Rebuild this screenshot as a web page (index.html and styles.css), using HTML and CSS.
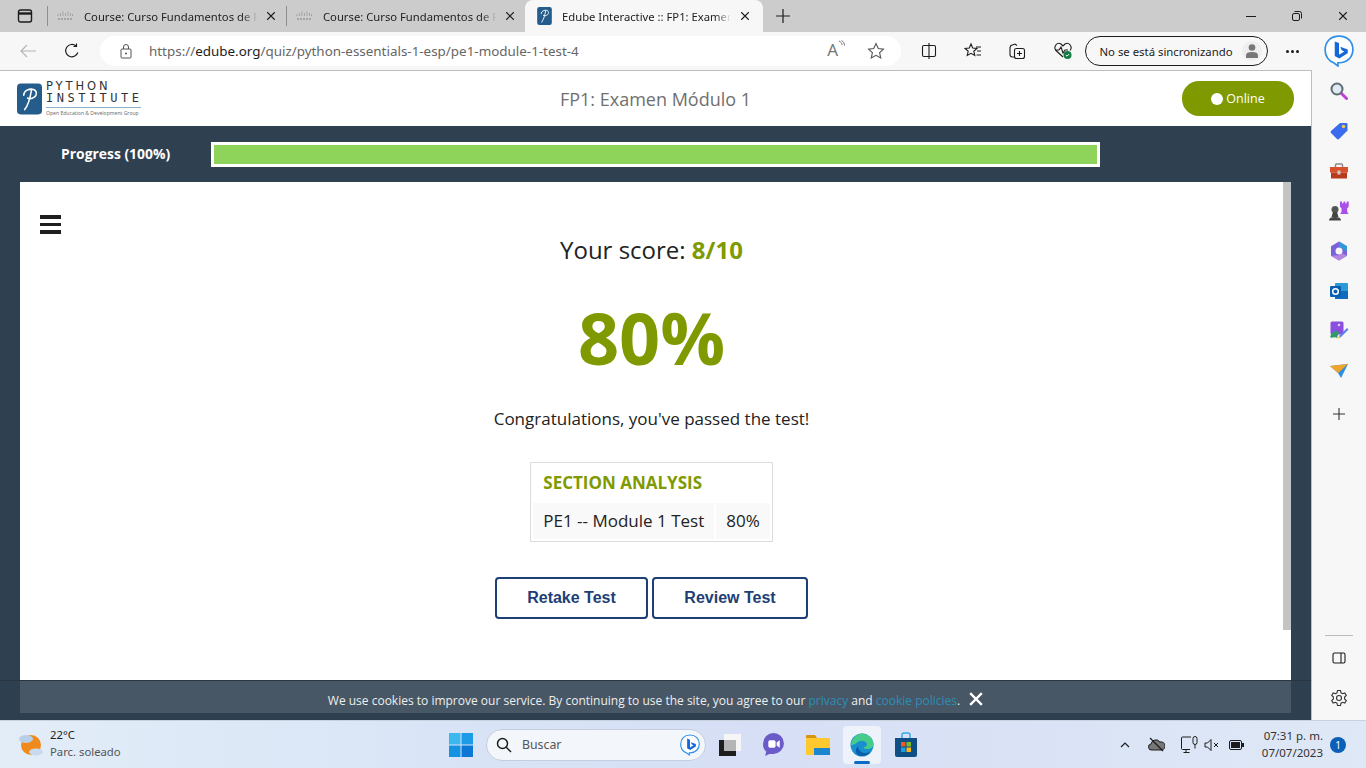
FILE: index.html
```html
<!DOCTYPE html>
<html lang="en">
<head>
  <meta charset="UTF-8">
  <title>Edube Interactive :: FP1: Examen Módulo 1</title>
  <link rel="stylesheet" href="styles.css">
</head>
<body>
<svg width="0" height="0" class="defs">
  <symbol id="cisco" viewBox="0 0 16 10">
    <path d="M1 3v2M3.500 2v3M6 0.500v4.500M8.500 2v3M11 0.500v4.500M13.500 2v3M15.500 3v2" stroke="#a5a5a5" stroke-width="1" fill="none"/>
    <path d="M1 8h14" stroke="#a5a5a5" stroke-width="2" stroke-dasharray="2 1"/>
  </symbol>
  <symbol id="close" viewBox="0 0 12 12">
    <path d="M1.500 1.500l9 9M10.500 1.500l-9 9" stroke="currentColor" stroke-width="1.300" fill="none"/>
  </symbol>
  <symbol id="close-bold" viewBox="0 0 12 12">
    <path d="M1 1l10 10M11 1L1 11" stroke="currentColor" stroke-width="2" fill="none"/>
  </symbol>
  <symbol id="pi" viewBox="0 0 26 32">
    <rect width="26" height="32" rx="4" fill="#245c8c"/>
    <path d="M7 12c0-5 6-7 10-6 4 1 4 6 1 8-2 1.500-5 2-7 1M15 7c-1 6-3 15-7 20" stroke="#fff" stroke-width="1.600" fill="none" stroke-linecap="round"/>
  </symbol>
  <symbol id="bing-mark" viewBox="0 0 28 30">
    <path d="M14 1C6 1 1 6.500 1 14c0 6 3.500 10.500 8 12l4 3v-3h1c8 0 13-5.500 13-12.500S22 1 14 1z" fill="#fff" stroke="#2f8fe8" stroke-width="1.600"/>
    <path d="M10 6l4 1.500v11l5-3-2.500-1.200-1.300-3.300 7 2.500v3.500l-8 5-4.200-2.300z" fill="#1668d8"/>
  </symbol>
</svg>

<div class="tabstrip">
  <svg class="tabs-btn" width="16" height="16" viewBox="0 0 16 16"><rect x="1.500" y="2" width="13" height="12" rx="2" fill="none" stroke="#1c1c1c" stroke-width="1.400"/><path d="M1.500 5.500h13" stroke="#1c1c1c" stroke-width="2.400"/></svg>
  <div class="tab">
    <svg class="tab-icon" width="16" height="10"><use href="#cisco"/></svg>
    <span class="tab-title">Course: Curso Fundamentos de P</span>
    <svg class="tab-close" width="10" height="10"><use href="#close"/></svg>
  </div>
  <div class="tab">
    <svg class="tab-icon" width="16" height="10"><use href="#cisco"/></svg>
    <span class="tab-title">Course: Curso Fundamentos de P</span>
    <svg class="tab-close" width="10" height="10"><use href="#close"/></svg>
  </div>
  <div class="tab tab-active">
    <svg class="tab-icon" width="15" height="18"><use href="#pi"/></svg>
    <span class="tab-title">Edube Interactive :: FP1: Examen</span>
    <svg class="tab-close" width="10" height="10"><use href="#close"/></svg>
  </div>
  <svg class="new-tab" width="14" height="14" viewBox="0 0 14 14"><path d="M7 0v14M0 7h14" stroke="#1c1c1c" stroke-width="1.200"/></svg>
  <div class="window-btns">
    <svg width="10" height="10" viewBox="0 0 10 10"><path d="M0 5.500h10" stroke="#1c1c1c"/></svg>
    <svg width="10" height="10" viewBox="0 0 10 10"><rect x="0.500" y="2.500" width="7" height="7" rx="1.500" fill="none" stroke="#1c1c1c"/><path d="M2.500 0.500h5a2 2 0 0 1 2 2v5" fill="none" stroke="#1c1c1c"/></svg>
    <svg width="10" height="10"><use href="#close"/></svg>
  </div>
</div>

<div class="toolbar">
  <svg class="back" width="16" height="14" viewBox="0 0 16 14"><path d="M16 7H1M7 1L1 7l6 6" stroke="#b5b5b5" stroke-width="1.200" fill="none"/></svg>
  <svg class="reload" width="16" height="16" viewBox="0 0 16 16"><path d="M13.800 9.500A6.200 6.200 0 1 1 12 3M12.500 0.500V3.500H9.500" stroke="#1c1c1c" stroke-width="1.200" fill="none"/></svg>
  <div class="address">
    <svg width="12" height="15" viewBox="0 0 12 15"><rect x="1" y="5" width="10" height="9" rx="1" fill="none" stroke="#555"/><path d="M3.500 5V3a2.500 2.500 0 0 1 5 0v2" fill="none" stroke="#555"/><circle cx="6" cy="9.500" r="1" fill="#555"/></svg>
    <span class="url">https://<b>edube.org</b>/quiz/python-essentials-1-esp/pe1-module-1-test-4</span>
    <span class="read-aloud">A<svg width="7" height="9" viewBox="0 0 7 9"><path d="M1 1c2 1 3 2 3 4M3.500 0.500c2 1 3 3 3 5" stroke="#777" fill="none"/></svg></span>
    <svg class="star" width="18" height="18" viewBox="0 0 18 18"><path d="M9 1.500l2.300 5 5.200.6-3.900 3.600 1.100 5.300L9 13.300 4.300 16l1.100-5.300L1.500 7.100l5.200-.6z" fill="none" stroke="#555" stroke-width="1.100"/></svg>
  </div>
  <div class="tool-icons">
    <svg width="16" height="16" viewBox="0 0 16 16"><path d="M8 0v16M8 2.500H3a1.500 1.500 0 0 0-1.500 1.500v8A1.500 1.500 0 0 0 3 13.500h5M8 2.500h5A1.500 1.500 0 0 1 14.500 4v8a1.500 1.500 0 0 1-1.500 1.500H8" fill="none" stroke="#1c1c1c" stroke-width="1.100"/></svg>
    <svg width="18" height="18" viewBox="0 0 18 18"><path d="M7 2l1.700 4 4.300.4-3.200 2.900 1 4.200L7 11.300l-3.800 2.200 1-4.200L1 6.400 5.300 6zM12 5h5M13 9h4M12.500 13h4.500" fill="none" stroke="#1c1c1c" stroke-width="1.100"/></svg>
    <svg width="18" height="18" viewBox="0 0 18 18"><path d="M6 15H4.500C3 15 2 14 2 12.500V5.500L3 3.500 7 2l2 1.500" fill="none" stroke="#1c1c1c" stroke-width="1.100"/><rect x="6.500" y="6.500" width="10" height="10" rx="2" fill="none" stroke="#1c1c1c" stroke-width="1.100"/><path d="M11.500 9v5M9 11.500h5" stroke="#1c1c1c" stroke-width="1.100"/></svg>
    <svg width="20" height="18" viewBox="0 0 20 18"><path d="M10 15L3 8.500C0 5 4-0.500 8 2l2 2 2-2c4-2.500 8 3 5 6.500" fill="none" stroke="#1c1c1c" stroke-width="1.100"/><path d="M2 8h4l2-3 2 6 2-3h3" fill="none" stroke="#1c1c1c" stroke-width="1.100"/><circle cx="14.500" cy="13" r="4" fill="#107c41"/><path d="M12.800 13l1.200 1.200 2.200-2.200" stroke="#fff" fill="none"/></svg>
  </div>
  <div class="sync">
    <span>No se está sincronizando</span>
    <span class="avatar"><svg width="12" height="14" viewBox="0 0 12 14"><circle cx="6" cy="3.500" r="3.300" fill="#777"/><path d="M0 14v-2.500C0 9 2 8 6 8s6 1 6 3.500V14z" fill="#777"/></svg></span>
  </div>
  <div class="more"><i></i><i></i><i></i></div>
  <svg class="bing" width="30" height="32"><use href="#bing-mark"/></svg>
</div>

<div class="viewport">
  <main class="page">
    <header class="site-head">
      <div class="logo">
        <svg width="25" height="32"><use href="#pi"/></svg>
        <div class="logo-text">
          <div class="logo-top">PYTHON</div>
          <div class="logo-main">INSTITUTE</div>
          <div class="logo-sub">Open Education &amp; Development Group</div>
        </div>
      </div>
      <div class="course-title">FP1: Examen Módulo 1</div>
      <div class="online"><i></i>Online</div>
    </header>

    <div class="progress-row">
      <span class="progress-label">Progress (100%)</span>
      <div class="progress-bar"><div class="progress-fill"></div></div>
    </div>

    <section class="card">
      <div class="content">
        <div class="menu-btn"><i></i><i></i><i></i></div>
        <p class="score">Your score: <b>8/10</b></p>
        <p class="percent">80%</p>
        <p class="message">Congratulations, you've passed the test!</p>
        <table class="analysis">
          <tr><th colspan="2">SECTION ANALYSIS</th></tr>
          <tr><td>PE1 -- Module 1 Test</td><td>80%</td></tr>
        </table>
        <div class="actions">
          <a class="btn btn-retake" href="#">Retake Test</a>
          <a class="btn btn-review" href="#">Review Test</a>
        </div>
      </div>
      <div class="scroll-thumb"></div>
    </section>

    <div class="cookie">
      <span>We use cookies to improve our service. By continuing to use the site, you agree to our <a href="#">privacy</a> and <a href="#">cookie policies</a>.</span>
      <svg class="cookie-close" width="14" height="14"><use href="#close-bold"/></svg>
    </div>
  </main>

  <aside class="sidebar">
    <div class="side-icon"><svg width="18" height="18" viewBox="0 0 18 18"><path d="M11 11l5.500 5.500" stroke="#c040d8" stroke-width="3" stroke-linecap="round"/><circle cx="7" cy="7" r="5.500" fill="#dfeaf2" stroke="#5f6b75" stroke-width="2"/></svg></div>
    <div class="side-icon"><svg width="18" height="18" viewBox="0 0 18 18"><path d="M10 1h6.500a1 1 0 0 1 1 1v6.500L9 17a1.500 1.500 0 0 1-2 0L1 11a1.500 1.500 0 0 1 0-2z" fill="#3b6cf0"/><circle cx="13.500" cy="4.500" r="1.700" fill="#f2c94c"/></svg></div>
    <div class="side-icon"><svg width="18" height="16" viewBox="0 0 18 16"><path d="M5.500 4V2a1 1 0 0 1 1-1h5a1 1 0 0 1 1 1v2" fill="none" stroke="#8a8a8a" stroke-width="1.500"/><rect y="4" width="18" height="5.500" fill="#d9512c"/><rect x="1" y="9.500" width="16" height="6" fill="#b83c1c"/><rect x="7.500" y="7.500" width="3" height="4" fill="#ccc"/></svg></div>
    <div class="side-icon"><svg width="20" height="20" viewBox="0 0 20 20"><circle cx="6" cy="8.500" r="3.500" fill="#555"/><path d="M4 11h4l1.500 5h-7zM0 19.500c0-2.500 2-3.500 6-3.500s6 1 6 3.500z" fill="#444"/><path d="M11 0.500h2v1.700h1.500V0.500h1.700v1.700h1.500V0.500h2V6l-1.500 1v4l1.500 2H11l1.500-2V7L11 6z" fill="#a94ee8"/></svg></div>
    <div class="side-icon"><svg width="18" height="20" viewBox="0 0 18 20"><path d="M9 0.500l8 4.700v9.600l-8 4.700-8-4.700V5.200z" fill="#7a63d8"/><path d="M9 0.500l8 4.700v5L9 5.500z" fill="#2f9bd8"/><path d="M1 14.800l8 4.700 8-4.700-5-2.500-3 2z" fill="#b689e0"/><circle cx="9" cy="10" r="3.500" fill="#f6f6f6"/></svg></div>
    <div class="side-icon"><svg width="18" height="18" viewBox="0 0 18 18"><rect x="5" y="1" width="13" height="16" rx="1" fill="#2a9ad6"/><rect x="5" y="9" width="13" height="8" fill="#0f6cbd"/><rect y="4" width="11" height="11" rx="1" fill="#0a5fb0"/><circle cx="5.500" cy="9.500" r="2.800" fill="none" stroke="#fff" stroke-width="1.500"/></svg></div>
    <div class="side-icon"><svg width="20" height="20" viewBox="0 0 20 20"><rect x="1.500" y="0.500" width="13" height="13" rx="1.500" fill="#8a4fe0"/><circle cx="10" cy="4" r="1.300" fill="#e0c8ff"/><path d="M1 16c2-6 6-7 9-5l-2 6c-3-2-5 1-7-1z" fill="#2f9c6a"/><path d="M10 15l8-8 1.500 1.500-8 8z" fill="#5b7fe8"/><path d="M8.500 18l1.500-3 1.500 1.500z" fill="#f2b632"/></svg></div>
    <div class="side-icon"><svg width="18" height="14" viewBox="0 0 18 14"><path d="M0 2l18-2-7 14-3-5z" fill="#2f8fe0"/><path d="M0 2l18-2L8 9z" fill="#f0a52a"/></svg></div>
    <div class="side-icon side-plus"><svg width="12" height="12" viewBox="0 0 12 12"><path d="M6 0v12M0 6h12" stroke="#333" stroke-width="1.100"/></svg></div>
    <div class="side-bottom">
      <div class="side-rule"></div>
      <div class="side-icon"><svg width="14" height="14" viewBox="0 0 14 14"><rect x="1" y="2" width="12" height="10" rx="1.500" fill="none" stroke="#1c1c1c" stroke-width="1.100"/><path d="M9 2v10" stroke="#1c1c1c" stroke-width="1.100"/></svg></div>
      <div class="side-icon"><svg width="18" height="18" viewBox="0 0 18 18"><path d="M7.500 1.500h3l.5 2.300 1.600.9 2.200-.8 1.500 2.600-1.700 1.600v1.800l1.700 1.600-1.500 2.600-2.200-.8-1.600.9-.5 2.300h-3L7 14.200l-1.600-.9-2.200.8-1.500-2.600 1.700-1.600V8.100L1.700 6.500l1.500-2.600 2.200.8L7 3.800z" fill="none" stroke="#333" stroke-width="1.100"/><circle cx="9" cy="9" r="2.500" fill="none" stroke="#333" stroke-width="1.100"/></svg></div>
    </div>
  </aside>
</div>

<footer class="taskbar">
  <div class="weather">
    <svg width="26" height="26" viewBox="0 0 26 26"><circle cx="13" cy="13" r="10" fill="#f08a1c"/><ellipse cx="8" cy="7" rx="7" ry="4" fill="#b9cfe6"/><ellipse cx="18" cy="20" rx="7" ry="3.500" fill="#c8daec"/></svg>
    <div class="weather-text"><div>22°C</div><div class="weather-sub">Parc. soleado</div></div>
  </div>
  <div class="task-center">
    <svg class="start" width="24" height="24" viewBox="0 0 24 24"><rect width="11.500" height="11.500" fill="#3bb8ee"/><rect x="12.500" width="11.500" height="11.500" fill="#1e9be6"/><rect y="12.500" width="11.500" height="11.500" fill="#1592e2"/><rect x="12.500" y="12.500" width="11.500" height="11.500" fill="#0a78d4"/></svg>
    <div class="search">
      <svg width="16" height="16" viewBox="0 0 16 16"><circle cx="6.500" cy="6.500" r="5" fill="none" stroke="#1c1c1c" stroke-width="1.500"/><path d="M10 10l5 5" stroke="#1c1c1c" stroke-width="1.500"/></svg>
      <span>Buscar</span>
      <svg class="search-bing" width="20" height="22"><use href="#bing-mark"/></svg>
    </div>
    <svg class="task-widgets" width="24" height="24" viewBox="0 0 24 24"><rect x="6" y="1" width="17" height="17" fill="#f6f6f6"/><rect x="1" y="7" width="17" height="16" fill="#1e1e1e"/><rect x="6" y="7" width="12" height="11" fill="#b5b5b5"/></svg>
    <svg class="task-meet" width="23" height="25" viewBox="0 0 22 24"><path d="M11 1a10 10 0 0 1 10 10 10 10 0 0 1-10 10H7l-4 2 1-4a10 10 0 0 1-3-8A10 10 0 0 1 11 1z" fill="#6a5bc8"/><rect x="6" y="8" width="7" height="7" rx="1.500" fill="#fff"/><path d="M14 10l3-2v7l-3-2z" fill="#fff"/></svg>
    <svg class="task-folder" width="24" height="24" viewBox="0 0 24 22"><path d="M0 2a1 1 0 0 1 1-1h8l2 3h-11z" fill="#d6960f"/><rect y="4" width="24" height="17" rx="1" fill="#fdc92e"/><rect x="8" y="14" width="16" height="7" fill="#1b86d0"/></svg>
    <div class="task-active">
      <svg width="24" height="24" viewBox="0 0 24 24"><circle cx="12" cy="12" r="11.500" fill="#1a8fd0"/><path d="M1 12C2 4 8 0.500 12 0.500c6 0 11.500 5 11.500 11 0 3-3 4.500-6 4.500-3 0-4-1-4-2 3 0 4-2 3-4-2-3-7-3-10 0C4 12 2 12 1 12z" fill="#46cc8a"/><path d="M8 13c0 4 3 7 7 7 2 0 4-.5 5.500-2-2 4-6 5-8.500 5C6 23 4 17 8 13z" fill="#0b5ea8"/></svg>
      <i></i>
    </div>
    <svg class="task-store" width="24" height="26" viewBox="0 0 24 26"><path d="M8 6V3a2 2 0 0 1 2-2h4a2 2 0 0 1 2 2v3" fill="none" stroke="#38a9e8" stroke-width="1.500"/><path d="M1 6h22v17a2 2 0 0 1-2 2H3a2 2 0 0 1-2-2z" fill="#0f4f86"/><rect x="7" y="10" width="4.500" height="4.500" fill="#ef5a24"/><rect x="12.500" y="10" width="4.500" height="4.500" fill="#7cbb2c"/><rect x="7" y="15.500" width="4.500" height="4.500" fill="#15a2e8"/><rect x="12.500" y="15.500" width="4.500" height="4.500" fill="#fdb813"/></svg>
  </div>
  <div class="tray">
    <svg width="10" height="6" viewBox="0 0 10 6"><path d="M1 5l4-4 4 4" fill="none" stroke="#1c1c1c" stroke-width="1.200"/></svg>
    <svg class="tray-cloud" width="17" height="15" viewBox="0 0 17 15"><path d="M4 13a3 3 0 0 1-1-6 5 5 0 0 1 9-2 4 4 0 0 1 2 8z" fill="#777" stroke="#1c1c1c"/><path d="M2 1l13 13" stroke="#1c1c1c" stroke-width="1.200"/></svg>
    <svg class="tray-net" width="17" height="18" viewBox="0 0 17 18"><path d="M9 13.500H1.500a1 1 0 0 1-1-1V2a1 1 0 0 1 1-1H10M5 13.500v3M2.500 16.500h6" fill="none" stroke="#1c1c1c"/><rect x="12" y="0.500" width="4" height="8" rx="2" fill="none" stroke="#1c1c1c"/><path d="M14 8.500v4" stroke="#1c1c1c"/></svg>
    <svg class="tray-vol" width="16" height="14" viewBox="0 0 16 14"><path d="M1 5v4h2.500L7 12.500v-11L3.500 5z" fill="none" stroke="#1c1c1c"/><path d="M10 5l4 4M14 5l-4 4" stroke="#1c1c1c"/></svg>
    <svg class="tray-bat" width="15" height="10" viewBox="0 0 15 10"><rect x="0.500" y="0.500" width="12" height="9" rx="1.500" fill="none" stroke="#1c1c1c"/><rect x="2" y="2" width="9" height="6" fill="#1c1c1c"/><rect x="13" y="3" width="2" height="4" fill="#1c1c1c"/></svg>
    <div class="clock"><div>07:31 p. m.</div><div>07/07/2023</div></div>
    <div class="badge">1</div>
  </div>
</footer>
</body>
</html>
```

FILE: styles.css
```css
/* Reset */
* {
  margin: 0;
  padding: 0;
  box-sizing: border-box;
}

body {
  width: 1366px;
  height: 768px;
  overflow: hidden;
  font-family: "Open Sans", "Noto Sans", sans-serif;
  background-color: #f7f7f7;
  color: #1c1c1c;
}

.defs {
  position: absolute;
}

/* Browser tab strip */
.tabstrip {
  display: flex;
  align-items: center;
  height: 32px;
  padding-left: 17px;
  background-color: #cccccc;
}

.tabs-btn {
  flex: none;
  margin-right: 14px;
}

.tab {
  display: flex;
  align-items: center;
  width: 239px;
  height: 32px;
  padding-left: 10px;
  background: linear-gradient(#8f8f8f, #8f8f8f) left center / 1px 20px no-repeat;
}

.tab-icon {
  flex: none;
  margin-right: 11px;
}

.tab-title {
  width: 179px;
  white-space: nowrap;
  font-family: "Noto Sans", sans-serif;
  font-size: 11.250px;
  color: #222;
  -webkit-mask-image: linear-gradient(to right, #000 88%, transparent 97%);
  mask-image: linear-gradient(to right, #000 88%, transparent 97%);
}

.tab-close {
  flex: none;
  margin-left: 3px;
  color: #1c1c1c;
}

.tab-active {
  width: 238px;
  padding-left: 12px;
  background: #f7f7f7;
  border-radius: 8px 8px 0 0;
}

.tab-active .tab-icon {
  margin-right: 10px;
}

.tab-active .tab-title {
  width: 174px;
}

.tab-active .tab-close {
  margin-left: 4px;
}

.new-tab {
  flex: none;
  margin-left: 13px;
}

.window-btns {
  display: flex;
  gap: 36px;
  margin-left: auto;
  padding-right: 18px;
  color: #1c1c1c;
}

/* Browser toolbar */
.toolbar {
  display: flex;
  align-items: center;
  height: 38px;
  background-color: #f7f7f7;
}

.back {
  flex: none;
  margin-left: 20px;
}

.reload {
  flex: none;
  margin-left: 28px;
}

.address {
  display: flex;
  align-items: center;
  width: 801px;
  height: 30px;
  margin-left: 20px;
  padding-left: 20px;
  background-color: #fff;
  border-radius: 15px;
}

.url {
  margin-left: 17px;
  font-family: "Noto Sans", sans-serif;
  font-size: 13.420px;
  color: #666;
  white-space: nowrap;
}

.url b {
  font-weight: 400;
  color: #1c1c1c;
}

.read-aloud {
  display: flex;
  margin-left: auto;
  margin-top: -2px;
  font-family: "Noto Sans", sans-serif;
  font-size: 17px;
  line-height: 20px;
  color: #777;
}

.star {
  margin: 0 16px 0 22px;
}

.tool-icons {
  display: flex;
  align-items: center;
  gap: 26.500px;
  margin-left: 20px;
}

.sync {
  display: flex;
  align-items: center;
  justify-content: space-between;
  width: 183px;
  height: 30px;
  margin-left: 12px;
  padding: 0 5px 0 14px;
  border: 1px solid #1c1c1c;
  border-radius: 15px;
  font-family: "Noto Sans", sans-serif;
  font-size: 11.350px;
  white-space: nowrap;
}

.avatar {
  display: flex;
  align-items: center;
  justify-content: center;
  width: 20px;
  height: 20px;
  border-radius: 50%;
  background-color: #eee;
}

.more {
  display: flex;
  gap: 2px;
  margin-left: 18px;
}

.more i {
  width: 3px;
  height: 3px;
  border-radius: 50%;
  background-color: #1c1c1c;
}

.bing {
  margin-left: 25px;
}

/* Page area */
.viewport {
  display: flex;
  height: 650px;
}

.page {
  position: relative;
  width: 1312px;
  height: 650px;
  border-top: 1px solid #bdbdbd;
  border-right: 1px solid #bdbdbd;
  background-color: #2f4050;
}

.site-head {
  display: flex;
  align-items: center;
  height: 55px;
  padding: 0 17px;
  background-color: #fff;
}

.logo {
  display: flex;
  align-items: center;
  gap: 4px;
  width: 300px;
}

.logo-text {
  width: 95px;
  color: #333;
  line-height: 1;
}

.logo-top {
  font-family: "DejaVu Sans", sans-serif;
  font-size: 11.500px;
  letter-spacing: 2.900px;
  line-height: 11px;
  white-space: nowrap;
}

.logo-main {
  margin-top: 1px;
  padding-bottom: 3px;
  font-family: "DejaVu Sans Mono", monospace;
  font-size: 12px;
  letter-spacing: 3.500px;
  line-height: 11px;
  border-bottom: 1px solid #8fb0cc;
  white-space: nowrap;
}

.logo-sub {
  margin-top: 2px;
  font-size: 5.100px;
  line-height: 6px;
  white-space: nowrap;
  color: #666;
}

.course-title {
  flex: 1;
  margin-right: 188px;
  text-align: center;
  font-size: 18px;
  color: #707070;
}

.online {
  display: flex;
  align-items: center;
  justify-content: center;
  gap: 3px;
  width: 112px;
  height: 35px;
  border-radius: 17px;
  background-color: #7f9a00;
  color: #fff;
  font-size: 12.500px;
}

.online i {
  width: 12px;
  height: 12px;
  border-radius: 50%;
  background-color: #fff;
}

.progress-row {
  display: flex;
  align-items: center;
  height: 56px;
}

.progress-label {
  width: 211px;
  padding-left: 61px;
  padding-bottom: 2px;
  font-size: 13.900px;
  font-weight: 700;
  color: #fff;
}

.progress-bar {
  width: 889px;
  height: 25px;
  border: 3px solid #fff;
  background-color: #fff;
}

.progress-fill {
  height: 100%;
  background-color: #8ed45b;
}

/* Result card */
.card {
  display: flex;
  width: 1271px;
  height: 531px;
  margin-left: 20px;
  background-color: #fff;
}

.content {
  position: relative;
  flex: 1;
  display: flex;
  flex-direction: column;
  align-items: center;
  padding-top: 51px;
}

.scroll-thumb {
  flex: none;
  width: 8px;
  height: 448px;
  background-color: #c4c4c4;
}

.menu-btn {
  position: absolute;
  left: 20px;
  top: 33px;
  display: flex;
  flex-direction: column;
  gap: 4px;
}

.menu-btn i {
  width: 21px;
  height: 3.500px;
  background-color: #1f1f1f;
}

.score {
  font-size: 24px;
  line-height: 34px;
  color: #222;
}

.score b {
  color: #7f9a00;
}

.percent {
  margin-top: 21px;
  font-size: 72px;
  font-weight: 700;
  line-height: 98px;
  color: #7f9a00;
}

.message {
  margin-top: 21px;
  font-size: 17px;
  line-height: 24px;
  color: #222;
}

.analysis {
  margin-top: 31px;
  border: 1px solid #dcdcdc;
  border-spacing: 2px;
  font-size: 17px;
  color: #222;
}

.analysis th {
  height: 36px;
  padding: 0 10px 2px;
  text-align: left;
  font-size: 17px;
  font-weight: 700;
  color: #7f9a00;
}

.analysis td {
  height: 36px;
  padding: 0 10px 2px;
  background-color: #f9f9f9;
}

.actions {
  display: flex;
  gap: 4px;
  margin-top: 35px;
}

.btn {
  display: flex;
  align-items: center;
  justify-content: center;
  height: 42px;
  border: 2px solid #1d3f75;
  border-radius: 4px;
  font-family: "Liberation Sans", sans-serif;
  font-size: 16px;
  font-weight: 700;
  color: #1d3f75;
  text-decoration: none;
}

.btn-retake {
  width: 153px;
}

.btn-review {
  width: 156px;
}

/* Cookie notice sits over the page */
.cookie {
  position: absolute;
  left: 0;
  right: 0;
  top: 609px;
  height: 40px;
  display: flex;
  align-items: center;
  justify-content: center;
  gap: 9px;
  border-top: 1px solid #2a3540;
  background-color: rgba(47, 64, 80, 0.88);
  color: #eee;
  font-size: 12px;
}

.cookie a {
  color: #2a8fb8;
  text-decoration: none;
}

.cookie-close {
  color: #fff;
  margin-bottom: 4px;
}

/* Edge sidebar */
.sidebar {
  display: flex;
  flex-direction: column;
  width: 54px;
  height: 650px;
  background-color: #f7f7f7;
}

.side-icon {
  flex: none;
  display: flex;
  align-items: center;
  justify-content: center;
  height: 40px;
}

.sidebar > .side-icon:first-child {
  margin-top: 1px;
}

.side-plus {
  margin-top: 3px;
}

.side-bottom {
  margin-top: auto;
  padding-bottom: 2px;
}

.side-rule {
  width: 28px;
  height: 1px;
  margin: 0 auto 2px;
  background-color: #bbb;
}

/* Windows taskbar */
.taskbar {
  display: flex;
  align-items: center;
  height: 48px;
  border-top: 1px solid #c8d2de;
  background: linear-gradient(to right, #e2edf8, #d8e4f6 35%, #d6dff5 55%, #dfe8f6);
  font-family: "Noto Sans", sans-serif;
}

.weather {
  display: flex;
  align-items: center;
  gap: 6px;
  width: 449px;
  padding-left: 18px;
  font-size: 11.300px;
  line-height: 17px;
}

.weather-text {
  padding-bottom: 3px;
}

.weather-sub {
  color: #555;
}

.task-center {
  display: flex;
  align-items: center;
}

.start {
  flex: none;
}

.search {
  display: flex;
  align-items: center;
  gap: 10px;
  width: 220px;
  height: 32px;
  margin-left: 13px;
  padding-left: 9px;
  border: 1px solid #c5cede;
  border-radius: 16px;
  background-color: #f3f6fb;
  font-size: 12.300px;
  color: #555;
}

.search-bing {
  margin-left: auto;
  margin-right: 5px;
}

.task-widgets {
  flex: none;
  margin-left: 12px;
}

.task-meet {
  flex: none;
  margin-left: 20px;
}

.task-folder {
  flex: none;
  margin-left: 21px;
}

.task-active {
  position: relative;
  display: flex;
  align-items: center;
  justify-content: center;
  width: 38px;
  height: 38px;
  margin-left: 13px;
  border-radius: 4px;
  background-color: #eef3fb;
}

.task-active i {
  position: absolute;
  bottom: 0;
  left: 11px;
  width: 16px;
  height: 3px;
  border-radius: 2px;
  background-color: #0a6cc4;
}

.task-store {
  flex: none;
  margin-left: 13px;
}

.tray {
  display: flex;
  align-items: center;
  margin-left: auto;
  padding-right: 20px;
  font-size: 11.500px;
}

.tray-cloud {
  margin-left: 18px;
}

.tray-net {
  margin-left: 16px;
}

.tray-vol {
  margin-left: 6px;
}

.tray-bat {
  margin-left: 9px;
}

.clock {
  width: 66px;
  margin-left: 13px;
  padding-bottom: 2px;
  text-align: right;
  line-height: 17px;
  color: #333;
}

.badge {
  display: flex;
  align-items: center;
  justify-content: center;
  width: 16px;
  height: 16px;
  margin-left: 7px;
  border-radius: 50%;
  background-color: #0a5fb8;
  color: #fff;
  font-size: 10px;
}
```
